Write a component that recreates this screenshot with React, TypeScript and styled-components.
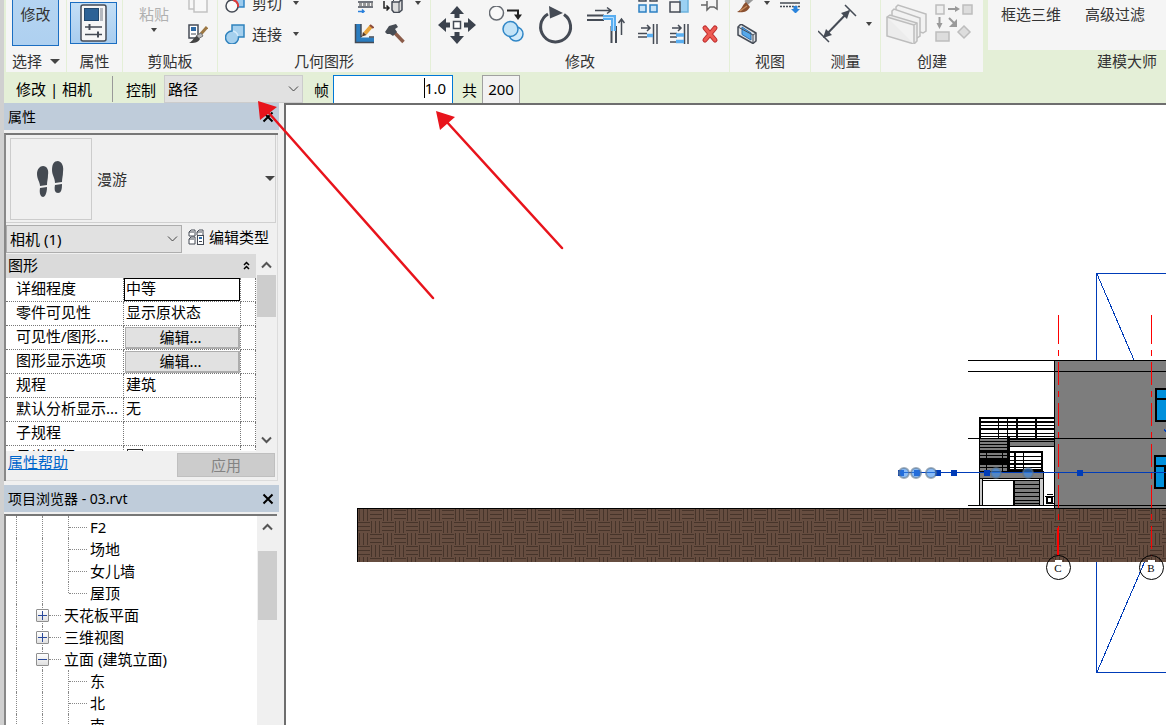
import React from "react";
import styled, { createGlobalStyle } from "styled-components";

const Global = createGlobalStyle`
  * { box-sizing: border-box; }
  body { margin: 0; overflow: hidden; }
  body, button, input, select {
    font-family: "Noto Sans", "Noto Sans CJK SC", sans-serif;
    font-size: 15px;
    color: #000;
  }
  button { padding: 0; border: 0; background: none; line-height: 20px; }
  svg { display: block; flex: none; }
`;

/* ---------- frame ---------- */

const Shell = styled.div`
  height: 100vh;
  display: flex;
  flex-direction: column;
  overflow: hidden;
  background: #f0f0f0;
  border-left: 4px solid #d0d0d0;
  position: relative;
`;

/* ---------- ribbon ---------- */

const Ribbon = styled.header`
  flex: none;
  height: 72px;
  display: flex;
  background: #e4efd7;
  gap: 1px;
  padding-left: 2px;
  overflow: hidden;
  color: #333;
`;

const Group = styled.section<{ $w?: number }>`
  flex: ${(p) => (p.$w ? `0 0 ${p.$w}px` : "1 0 0")};
  display: flex;
  flex-direction: column;
  background: #f5f5f5;
  min-width: 0;
`;

const GroupBody = styled.div<{ $left?: number; $gap?: number }>`
  height: 52px;
  display: flex;
  align-items: flex-end;
  padding: 0 0 8px ${(p) => p.$left ?? 0}px;
  gap: ${(p) => p.$gap ?? 0}px;
`;

const GroupLabel = styled.div`
  height: 20px;
  display: flex;
  align-items: center;
  justify-content: center;
  gap: 8px;
  line-height: 18px;
  padding-bottom: 2px;
  white-space: nowrap;
  color: #333;
`;

const AddinGroup = styled(Group)`
  margin-left: 4px;
  background: none;
`;

const AddinBody = styled.div`
  flex: none;
  height: 50px;
  background: #f5f5f5;
  display: flex;
  gap: 24px;
  padding: 4px 0 0 13px;
  align-items: flex-start;
  white-space: nowrap;
`;

const AddinLabel = styled.div`
  line-height: 22px;
  padding-right: 9px;
  text-align: right;
`;

const RibbonButton = styled.button`
  flex: none;
  display: flex;
  align-items: center;
  color: #333;
`;

const ModifyButton = styled(RibbonButton)`
  width: 47px;
  height: 90px;
  margin-bottom: -2px;
  padding-bottom: 21px;
  justify-content: center;
  align-items: flex-end;
  border: 1px solid #1b6ec2;
  background: linear-gradient(#bcd9f3, #aed0f0);
`;

const PropsButton = styled(RibbonButton)`
  width: 47px;
  height: 42px;
  justify-content: center;
  border: 1px solid #1b6ec2;
  background: linear-gradient(#c4dff6, #a9cdef);
`;

const PasteButton = styled(RibbonButton)`
  height: 40px;
  flex-direction: column;
  gap: 4px;
  color: #b0b0b0;
`;

const MoreButton = styled(RibbonButton)`
  height: 40px;
`;

const Stack = styled.div`
  display: flex;
  flex-direction: column;
  gap: 11px;
`;

const Line = styled.div<{ $gap?: number }>`
  height: 20px;
  display: flex;
  align-items: center;
  gap: ${(p) => p.$gap ?? 7}px;
`;

const IconText = styled(RibbonButton)`
  gap: 7px;
  white-space: nowrap;
`;

const DownMark = styled.span<{ $big?: boolean }>`
  display: inline-block;
  flex: none;
  border: solid transparent;
  border-width: ${(p) => (p.$big ? "5px 5px 0" : "4px 3px 0")};
  border-top-color: #444;
`;

/* ---------- options bar ---------- */

const Options = styled.div`
  flex: none;
  height: 31px;
  display: flex;
  align-items: center;
  background: #e4efd7;
  padding: 3px 0 0 12px;
`;

const OptionTitle = styled.div`
  width: 97px;
  line-height: 26px;
  border-right: 1px solid #999;
`;

const OptionLabel = styled.label<{ $left: number; $right: number }>`
  line-height: 28px;
  padding: 2px ${(p) => p.$right}px 0 ${(p) => p.$left}px;
`;

const SelectWrap = styled.span<{ $w: number }>`
  width: ${(p) => p.$w}px;
  display: grid;
  align-items: center;
  > * { grid-area: 1 / 1; }
  > svg { justify-self: end; margin-right: 4px; pointer-events: none; }
`;

const Select = styled.select<{ $pad: number; $soft?: boolean }>`
  appearance: none;
  width: 100%;
  height: 28px;
  border: 1px solid ${(p) => (p.$soft ? "#ccc" : "#adadad")};
  border-radius: 0;
  background: #e1e1e1;
  padding: 0 0 0 ${(p) => p.$pad}px;
`;

const FrameInput = styled.input`
  width: 120px;
  height: 28px;
  border: 1px solid #0078d7;
  border-bottom: 0;
  padding: 0 6px 3px 0;
  text-align: right;
  outline: 0;
  background: #fff;
`;

const Caret = styled.span`
  width: 1px;
  height: 20px;
  background: #000;
  justify-self: end;
  margin: 0 28px 2px 0;
`;

const InputWrap = styled.span`
  display: grid;
  align-items: center;
  > * { grid-area: 1 / 1; }
`;

const TotalButton = styled.button`
  width: 38px;
  height: 28px;
  padding-bottom: 2px;
  border: 1px solid #a0a0a0;
  border-bottom: 0;
  background: #f2f2f2;
`;

/* ---------- docked panels ---------- */

const Main = styled.main`
  flex: 1;
  min-height: 0;
  display: flex;
`;

const Dock = styled.aside`
  flex: none;
  width: 275px;
  margin-right: 5px;
  display: flex;
  flex-direction: column;
  min-height: 0;
`;

const TitleBar = styled.h2`
  flex: none;
  margin: 0;
  height: 27px;
  padding: 1px 5px 0 4px;
  display: flex;
  align-items: center;
  justify-content: space-between;
  background: #bfccda;
  font-size: 14px;
  font-weight: 400;
  line-height: 22px;
`;

const Panel = styled.div`
  flex: none;
  margin: 3px 1px 4px 0;
  border: solid #888;
  border-width: 2px 0 0 2px;
  border-top-color: #777;
  box-shadow: inset -1px -1px #dcdcdc;
  padding-right: 2px;
  height: 348px;
`;

const TypeSelector = styled.button`
  width: 100%;
  height: 88px;
  padding: 3px 0 3px 4px;
  display: flex;
  align-items: center;
  border-bottom: 1px solid #d0d0d0;
  border-right: 1px solid #d0d0d0;
  color: #333;
`;

const Preview = styled.span`
  width: 82px;
  height: 82px;
  border: 1px solid #ccc;
  display: grid;
  place-items: center;
  margin-right: 5px;
`;

const Grow = styled.span`
  flex: 1;
  text-align: left;
`;

const FilterRow = styled.div`
  display: flex;
  gap: 6px;
  padding: 2px 0 1px;
`;

const EditType = styled.button`
  display: flex;
  align-items: center;
  gap: 5px;
  padding-bottom: 4px;
`;

const Scroller = styled.div`
  display: flex;
  height: 197px;
`;

const Clip = styled.div`
  flex: none;
  width: 250px;
  height: 100%;
  overflow: hidden;
  background: #fff;
`;

const Table = styled.table`
  width: 100%;
  table-layout: fixed;
  border-collapse: separate;
  border-spacing: 0;
  th { font-weight: 400; text-align: left; }
`;

const Category = styled.th`
  height: 24px;
  padding: 0 6px 1px 2px;
  background: #dadada;
`;

const CategoryRow = styled.div`
  display: flex;
  justify-content: space-between;
  align-items: center;
  line-height: 21px;
`;

const Cell = styled.td<{ $active?: boolean }>`
  height: 24px;
  padding: 0 0 3px 2px;
  line-height: 20px;
  white-space: nowrap;
  border-right: 1px dotted #777;
  border-bottom: 1px dotted #777;
  ${(p) => p.$active && "box-shadow: inset 0 0 0 1px #000;"}
`;

const ButtonCell = styled(Cell)`
  padding-bottom: 0;
`;

const NameCell = styled(Cell).attrs({ as: "th", scope: "row" })`
  padding-left: 10px;
`;

const EditButton = styled.button`
  display: block;
  width: 115px;
  height: 22px;
  margin-left: -1px;
  padding: 0 3px 3px 0;
  line-height: 18px;
  border: 1px solid #adadad;
  border-right-width: 2px;
  border-bottom-width: 2px;
  background: #e1e1e1;
`;

const Check = styled.input`
  appearance: none;
  display: block;
  margin: 2px 0 0 1px;
  width: 16px;
  height: 16px;
  border: 1px solid #333;
`;

const Bar = styled.div<{ $before: number }>`
  flex: none;
  width: 20px;
  display: flex;
  flex-direction: column;
  align-items: center;
  justify-content: space-between;
  background: #f0f0f0;
  padding: ${(p) => p.$before}px 0 7px;
`;

const BarTop = styled.div<{ $gap: number }>`
  display: flex;
  flex-direction: column;
  align-items: center;
  gap: ${(p) => p.$gap}px;
`;

const Thumb = styled.div<{ $h: number }>`
  width: 19px;
  height: ${(p) => p.$h}px;
  background: #cdcdcd;
`;

const Footer = styled.div`
  display: flex;
  justify-content: space-between;
  padding: 2px 1px 0 2px;
  a { color: #0066cc; line-height: 19px; }
`;

const Apply = styled.button`
  width: 98px;
  height: 24px;
  border: 1px solid #bfbfbf;
  background: #ccc;
  color: #838383;
`;

/* ---------- project browser ---------- */

const TreePanel = styled.div`
  flex: 1;
  min-height: 0;
  margin: 2px 2px 0 0;
  border: solid #888;
  border-width: 2px 0 0 2px;
  border-top-color: #777;
  display: flex;
  overflow: hidden;
  background: #fff;
`;

const Tree = styled.ul`
  flex: 1;
  margin: 0;
  padding: 0;
  list-style: none;
`;

const TreeRow = styled.li`
  height: 22px;
  display: flex;
  align-items: center;
  padding-left: 10px;
  line-height: 22px;
  white-space: nowrap;
`;

const Guide = styled.span<{ $half?: boolean }>`
  flex: none;
  width: 26px;
  height: ${(p) => (p.$half ? 11 : 22)}px;
  align-self: flex-start;
  border-left: 1px dotted #888;
`;

const Stub = styled.span<{ $leaf?: boolean }>`
  flex: none;
  width: ${(p) => (p.$leaf ? 18 : 12)}px;
  margin: 0 3px 0 ${(p) => (p.$leaf ? -25 : 0)}px;
  border-top: 1px dotted #888;
`;

const Toggle = styled.button`
  flex: none;
  width: 13px;
  height: 13px;
  margin-left: -32px;
  border: 1px solid #8f8f8f;
  border-radius: 1px;
  background: linear-gradient(#fff, #e0e0e0);
`;

/* ---------- drawing area ---------- */

const Canvas = styled.section`
  flex: 1;
  min-width: 0;
  overflow: hidden;
  background: #fff;
  border: solid #6e6e6e;
  border-width: 2px 0 0 2px;
`;

const FullSvg = styled.svg`
  width: 100%;
  height: 100%;
`;

const Callouts = styled.svg`
  position: absolute;
  top: 0;
  left: -4px;
  width: 600px;
  height: 320px;
  pointer-events: none;
`;

/* ---------- icons ---------- */

const D = "#454b55";
const B = "#5aaef0";

const Icon = ({ w = 20, h = 20, children }: { w?: number; h?: number; children: React.ReactNode }) => (
  <svg width={w} height={h} viewBox={`0 0 ${w} ${h}`} fill="none" stroke={D} strokeWidth="1.5">
    {children}
  </svg>
);

const Chevron = ({ up = false, bold = false }) => (
  <svg width="11" height="8" viewBox="0 0 11 8" fill="none" stroke={bold ? "#555" : "#444"} strokeWidth={bold ? 2 : 1}>
    <path d={up ? "M1 6.5 5.5 2 10 6.5" : "M1 1.5 5.5 6 10 1.5"} />
  </svg>
);

const Close = () => (
  <svg width="12" height="12" viewBox="0 0 12 12" stroke="#000" strokeWidth="2">
    <path d="M1.5 1.5 10.5 10.5M10.5 1.5 1.5 10.5" />
  </svg>
);

const PropsIcon = () => (
  <Icon w={28} h={38}>
    <rect x="1" y="1" width="25" height="36" rx="2" fill="#f6f6f6" />
    <rect x="4.5" y="4.500" width="14" height="12" fill="#2d6296" stroke="#23486c" strokeWidth="1" />
    <path d="M21.500 4V17" stroke="#b5b9bf" strokeWidth="3" />
    <path d="M5 23H22M5 30.500H22" />
    <path d="M9.500 20V26M18 27.500V33.500" strokeWidth="2" />
  </Icon>
);

const CopyIcon = () => (
  <Icon>
    <path d="M1 1V16H6M6 5H19V19H6Z" fill="#f8f8f8" stroke="#c2c2c2" />
  </Icon>
);

const MatchIcon = () => (
  <Icon>
    <rect x="1" y="1" width="9" height="13" fill="#fff" />
    <rect x="3" y="3" width="5" height="4" fill="#2f6ba5" stroke="none" />
    <path d="M3 10H8" strokeWidth="1" />
    <path d="M19 3 12 11" stroke="#9c7743" strokeWidth="3" />
    <path d="M13 9 15 12 10 15 8 12Z" fill="#bbb" stroke="#777" strokeWidth="1" />
    <path d="M9 12 12 15C10 19 6 19 1 19 5 17 5 14 9 12Z" fill="#444" stroke="none" />
  </Icon>
);

const CutIcon = () => (
  <Icon>
    <path d="M9 3H19V14H13" fill="#9ccbee" stroke="#3185c5" />
    <circle cx="7" cy="13" r="6" fill="#fafafa" />
    <path d="M8 7A6 6 0 0 1 13 14" stroke="#e03a3a" strokeWidth="2" />
  </Icon>
);

const JoinIcon = () => (
  <Icon>
    <path d="M7 1H19V13H13.500A6.500 6.500 0 1 1 7 7Z" fill="#a5d0ee" stroke="#2f82bd" />
    <path d="M8 7A7 7 0 0 1 13 12" stroke="#d3eafa" />
  </Icon>
);

const WallIcon = () => (
  <Icon>
    <path d="M4 9H19M4 14H19" />
    <path d="M5 11.500H19" stroke="#999" strokeWidth="3" strokeDasharray="3 1" />
    <path d="M4 18.500H10M8 16.500 10 18.500 8 20" stroke="#2980dc" />
  </Icon>
);

const CubeIcon = () => (
  <Icon w={24}>
    <path d="M11 9V17L13 19.500H18L21 17V6L18 9H11Z" fill="#ddd" />
    <path d="M11 9 14 6H21M18 9V19" strokeWidth="1" />
    <path d="M3 8V15H8M5.500 12.500 8 15 5.500 17.500" stroke="#222" />
  </Icon>
);

const PencilWallIcon = () => (
  <Icon>
    <path d="M4.500 0V16H20" stroke="#2b7dc0" strokeWidth="5" />
    <path d="M1.500 0V18.500H20M7 0V12.500H8M15 13H20" />
    <path d="M17.500 2 11 9.500" stroke="#e8a33a" strokeWidth="4" />
    <path d="M16 1 19.500 4" stroke="#8c4b3b" strokeWidth="2" />
    <path d="M9 8 12.500 11 8 12.500Z" fill="#5b3a1e" stroke="none" />
  </Icon>
);

const HammerIcon = () => (
  <Icon>
    <path d="M9 8 18.500 18" stroke="#8b5c49" strokeWidth="3.500" />
    <path d="M0 8 4 2 11 0 13 3 10 5 12 8 8 12 5 10 2 10Z" fill="#464c54" stroke="none" />
  </Icon>
);

const MoveIcon = () => (
  <Icon w={38} h={38}>
    <path d="M19 0 26 8H21.500V12H16.500V8H12ZM19 38 26 30H21.500V26H16.500V30H12ZM0 19 8 12V16.500H12V21.500H8V26ZM38 19 30 12V16.500H26V21.500H30V26Z" fill="#3b424d" stroke="none" />
    <rect x="15.500" y="15.500" width="7" height="7" fill="#fff" />
  </Icon>
);

const CopyObjIcon = () => (
  <Icon w={36} h={38}>
    <circle cx="7.500" cy="7" r="7" fill="#f8f8f8" stroke="#666b72" />
    <path d="M18 4.500H29V10" stroke="#222" strokeWidth="2" />
    <path d="M25 8.500H33L29 14Z" fill="#222" stroke="none" />
    <circle cx="27" cy="28" r="7" fill="#d1eafa" stroke="#3086c6" />
    <circle cx="21.500" cy="23" r="7.500" fill="#c3e3f7" stroke="#3086c6" />
  </Icon>
);

const RotateIcon = () => (
  <Icon w={36} h={38}>
    <path d="M26 8.500A15 15 0 1 1 10 8" strokeWidth="3" />
    <path d="M11 0 25 7 12 12.500Z" fill={D} stroke="none" />
  </Icon>
);

const TrimIcon = () => (
  <Icon w={38} h={38}>
    <path d="M8 4.500H23M20 1.500 24 4.500 20 7.500M34.500 29V14M31.500 17 34.500 13 37.500 17" />
    <path d="M0 9.500H17M0 14H17M24.500 20V37M29 20V37" strokeWidth="2" />
    <path d="M16 11.500H26.500V25" stroke={B} strokeWidth="5" />
    <path d="M16 11.500H26.500V25" stroke="#b9e0ff" strokeWidth="1" />
  </Icon>
);

const ArrayIcon = () => (
  <Icon>
    <path d="M1 2H8V8H1ZM12 2H19V8H12Z" fill="#eee" />
    <path d="M1 12H8V19H1ZM12 12H19V19H12Z" fill="#c5e3f8" stroke="#2d80c2" />
  </Icon>
);

const ScaleIcon = () => (
  <Icon>
    <path d="M10 1H19V19H10" fill="#9bd0f2" stroke="#6eb2dd" />
    <rect x="1" y="9" width="10" height="10" fill="#f3f3f3" />
  </Icon>
);

const PinIcon = () => (
  <Icon>
    <path d="M1 12H7M7 8V17L10 14H14L17 16V7" stroke="#666" />
  </Icon>
);

const AlignIcon = ({ multi = false }) => (
  <Icon>
    <path d="M15.500 0V20M19 0V20" />
    <path d="M3 4H12M9 1 12 4 9 7" />
    <path d={multi ? "M1 9.500H8M1 13H8M1 18H8" : "M0 9.500H9M0 13H9"} />
    <path d={multi ? "M7 11H15M7 17.500H15" : "M9 11.500H15"} stroke={B} strokeWidth="3.500" />
  </Icon>
);

const DeleteIcon = () => (
  <Icon>
    <path d="M5 4 15 16M15 4 5 16" stroke="#bc2d2d" strokeWidth="5" strokeLinecap="round" />
    <path d="M5 4 15 16M15 4 5 16" stroke="#ee5a52" strokeWidth="3" strokeLinecap="round" />
  </Icon>
);

const BrushIcon = () => (
  <Icon>
    <path d="M9 10 17 3" stroke="#999" strokeWidth="5" />
    <path d="M9 9 13 14C10 19 6 20 0 19 5 17 5 12 9 9Z" fill="#8a5030" stroke="none" />
    <path d="M3 18 10 13" stroke="#c98b5b" />
  </Icon>
);

const LinesIcon = () => (
  <Icon>
    <path d="M0 10H20" />
    <path d="M0 13.500H20" strokeDasharray="2 1" />
    <path d="M13.500 13H17.500V16H20L15.500 20.500 11 16H13.500Z" fill="#2b84dc" stroke="none" />
  </Icon>
);

const BoxIcon = () => (
  <Icon>
    <path d="M1 3 4 0 19 9V17L16 19.500 1 11Z" fill="#dde1e5" />
    <path d="M5 3 14 9V16L5 10.500Z" fill="#55a8ea" stroke="#2d6fae" strokeWidth="1" />
    <path d="M16 19V11L19 9M16 11 1 3" strokeWidth="1" />
  </Icon>
);

const MeasureIcon = () => (
  <Icon w={40} h={40}>
    <path d="M6 33 31 7" strokeWidth="2" />
    <path d="M5 34 8 25 14 31ZM32 6 23 9 29 15Z" fill={D} stroke="none" />
    <path d="M0 27 11 38M27 1 38 12" />
  </Icon>
);

const GroupIcon = () => (
  <Icon w={42} h={40}>
    <g fill="#f2f2f2" stroke="#bdbdbd">
      <path d="M10 3 12 1 40 10V27L37 29 10 20Z" />
      <path d="M6 7 8 5 34 14V32L31 34 6 25Z" />
      <path d="M1 13 4 11 31 19V37L28 40 1 32Z" fill="#ececec" />
      <path d="M1 13 28 21V40M28 21 31 19" />
    </g>
  </Icon>
);

const SimilarIcon = () => (
  <Icon w={38} h={40}>
    <g fill="#eee" stroke="#bdbdbd">
      <rect x="1" y="1" width="8" height="9" />
      <rect x="28" y="1" width="9" height="9" fill="#ddd" />
      <rect x="1" y="28" width="13" height="9" fill="#ddd" />
      <path d="M29 22 35 28 29 34 23 28Z" fill="#ddd" />
    </g>
    <g stroke="#9a9a9a" strokeWidth="2">
      <path d="M13 5H21M4.500 13V20M14 14 19 19" />
      <path d="M20 2 25 5 20 8ZM1.500 19 4.500 25 7.500 19ZM22 15V23H14Z" fill="#9a9a9a" stroke="none" />
    </g>
  </Icon>
);

const FeetIcon = () => (
  <svg width="30" height="40" viewBox="0 0 30 40" fill="#444a52">
    <path d="M7 7C11 7 13 11 12 16 12 20 11 22 11 26L4 27C4 23 1 20 1 15 1 10 4 7 7 7Z" />
    <path d="M4 29 11 28C11 34 9 38 7 38 5 38 3 35 4 29Z" />
    <path d="M22 2C26 3 28 7 27 13 27 17 26 19 26 23L19 24C19 19 16 16 16 11 16 5 18 2 22 2Z" />
    <path d="M19 26 26 25C26 31 25 34 22 34 19 34 18 31 19 26Z" />
  </svg>
);

const EditTypeIcon = () => (
  <Icon w={16} h={16}>
    <g strokeWidth="1">
      <path d="M1 3 3 1H7V7H1ZM9 3 11 1H15V6M9 6V3M1 10 3 8H7V15H1ZM1 3H6M9 3H14M1 10H6" fill="#fff" />
      <rect x="9.500" y="6.500" width="6" height="9" fill="#fff" />
      <path d="M11 9H14" stroke="#2d6fae" strokeWidth="2" />
      <path d="M11 12.500H14" />
    </g>
  </Icon>
);

/* ---------- data ---------- */

type Prop = { name: string; value?: string; kind?: "edit" | "active" | "check" };

const PROPS: Prop[] = [
  { name: "详细程度", value: "中等", kind: "active" },
  { name: "零件可见性", value: "显示原状态" },
  { name: "可见性/图形...", kind: "edit" },
  { name: "图形显示选项", kind: "edit" },
  { name: "规程", value: "建筑" },
  { name: "默认分析显示...", value: "无" },
  { name: "子规程" },
  { name: "日光路径", kind: "check" },
];

type Node = { label: string; leaf?: boolean; last?: boolean; open?: boolean };

const NODES: Node[] = [
  { label: "F2", leaf: true },
  { label: "场地", leaf: true },
  { label: "女儿墙", leaf: true },
  { label: "屋顶", leaf: true, last: true },
  { label: "天花板平面" },
  { label: "三维视图" },
  { label: "立面 (建筑立面)", open: true },
  { label: "东", leaf: true },
  { label: "北", leaf: true },
  { label: "南", leaf: true },
];

/* ---------- elevation drawing ---------- */

const BLUE = "#003cb8";

const Elevation = () => (
  <FullSvg shapeRendering="crispEdges" role="img" aria-label="立面">
    <defs>
      <pattern id="weave" x="358" y="509" width="24" height="24" patternUnits="userSpaceOnUse">
        <rect width="24" height="24" fill="#664d40" />
        <path
          d="M1.500 0V12M5.500 0V12M9.500 0V12M12 1.500H24M12 5.500H24M12 9.500H24M13.500 12V24M17.500 12V24M21.500 12V24M0 13.500H12M0 17.500H12M0 21.500H12"
          stroke="#46342a"
        />
      </pattern>
    </defs>
    <g transform="translate(-286 -105)" fill="none" stroke="#000">
      <path d="M1096.500 360V273.500H3000M1097 274 1134 360M1096.500 561V672.500H3000M1097 672 1145 561" stroke={BLUE} />
      <rect x="1054.500" y="360.500" width="2000" height="148" fill="#7d7d7d" />
      <path d="M968 360.500H3000M968 371.500H3000M968 438.500H3000M968 505.500H3000" />

      <path d="M979 418H1055M979 422H1055M979 429H1055M980 417V438" strokeWidth="2" />
      <path d="M979 425.500H1055M979 433.500H1055M979 436.500H1055M998.500 417V438M1007.500 417V438" />
      <path d="M1017 417V438M1036 417V438" strokeWidth="2" />

      <rect x="1009.500" y="439.500" width="45" height="7" fill="#7d7d7d" />
      <path d="M1009 441.500H1055" />
      <rect x="979.500" y="438.500" width="30" height="33" fill="#7d7d7d" />
      <path d="M979 441.500H1009M979 444.500H1009M979 447.500H1009M979 455.500H1009M979 467.500H1009M986.500 450V471M1002.500 450V471" />
      <path d="M979 451.500H1009" strokeWidth="3" />
      <path d="M979 461.500H1009" strokeWidth="7" />
      <path d="M1008.500 437V471" strokeWidth="3" />

      <path d="M1010 452H1043M1010 464H1043M1010 470H1043M1015 451V471M1042 451V471" strokeWidth="2" />
      <path d="M1010 456.500H1043M1010 460.500H1043M1010 467.500H1043M1023.500 451V471" />

      <rect x="979.500" y="478.500" width="3" height="27" fill="#ccc" />
      <rect x="1039.500" y="478.500" width="4" height="27" fill="#ccc" />
      <rect x="979.500" y="471.500" width="64" height="7" fill="#7d7d7d" />
      <path d="M982 480.500H1040" />
      <rect x="1013.500" y="480.500" width="26" height="25" fill="#7d7d7d" />
      <path d="M1014 484.500H1039M1014 488.500H1039M1014 492.500H1039M1014 496.500H1039M1014 500.500H1039M1014 503.500H1039" />
      <path d="M1014 480V506" strokeWidth="2" />
      <path d="M1045 496.500H1054M1047 494.500H1053M1046 503.500H1054" />
      <rect x="1047" y="497" width="5" height="6" strokeWidth="2" />

      <g fill="#0090dc" strokeWidth="2">
        <rect x="1156" y="389" width="24" height="32" />
        <path d="M1156 399H1180" />
        <rect x="1155" y="456" width="24" height="32" />
        <path d="M1155 466H1179M1165 466V488" />
      </g>
      <path d="M1164 429 1166 432 1170 428" stroke={BLUE} />

      <rect x="357" y="508" width="3000" height="54" fill="url(#weave)" stroke="none" />
      <path d="M357 508.500H3000M357.500 508V562" />

      <g stroke="#f00">
        <path d="M1058.500 315V344M1151.500 315V344" />
        <path d="M1058.500 350V556M1151.500 350V556" strokeDasharray="6 6 23 6" />
        <path d="M1058 528V556" strokeWidth="2" />
      </g>

      <path d="M898 472.500H3000" stroke={BLUE} />
      {[901, 917, 938, 954, 987, 1080].map((x) => (
        <rect key={x} x={x - 3} y="470" width="6" height="6" fill={BLUE} stroke="none" />
      ))}
      <g shapeRendering="auto">
        {[904, 916, 931, 996, 1028].map((x) => (
          <circle key={x} cx={x} cy="473" r="5" fill="#3a8df0" fillOpacity=".6" stroke="#5f7488" strokeOpacity=".6" strokeWidth="2" />
        ))}
        {[
          [1058, "C"],
          [1151, "B"],
        ].map(([x, t]) => (
          <g key={t}>
            <circle cx={Number(x) + 0.5} cy="567.500" r="12" />
            <rect x={Number(x) - 3} y="560" width="7" height="12" fill="#fff" stroke="none" />
            <text x={x} y="572" textAnchor="middle" fontFamily="Liberation Serif, serif" fontSize="11" fill="#000" stroke="none">
              {t}
            </text>
          </g>
        ))}
      </g>
    </g>
  </FullSvg>
);

const PropertyRow = ({ p }: { p: Prop }) => (
  <tr>
    <NameCell>{p.name}</NameCell>
    {p.kind === "edit" ? (
      <ButtonCell>
        <EditButton>编辑...</EditButton>
      </ButtonCell>
    ) : (
      <Cell $active={p.kind === "active"}>
        {p.kind === "check" && <Check type="checkbox" aria-label={p.name} />}
        {p.value}
      </Cell>
    )}
    <Cell />
  </tr>
);

const TreeNode = ({ n }: { n: Node }) => (
  <TreeRow>
    <Guide />
    <Guide />
    {n.leaf ? (
      <>
        <Guide $half={n.last} />
        <Stub $leaf />
      </>
    ) : (
      <>
        <Toggle aria-label={n.label}>
          <svg width="11" height="11" viewBox="0 0 11 11" stroke="#2b4a9b">
            <path d={n.open ? "M1 5.500H10" : "M1 5.500H10M5.500 1V10"} />
          </svg>
        </Toggle>
        <Stub />
      </>
    )}
    <span>{n.label}</span>
  </TreeRow>
);

export default function App() {
  return (
    <Shell>
      <Global />
      <Ribbon>
        <Group $w={60}>
          <GroupBody $left={6}>
            <ModifyButton>修改</ModifyButton>
          </GroupBody>
          <GroupLabel>
            选择
            <DownMark $big />
          </GroupLabel>
        </Group>
        <Group $w={55}>
          <GroupBody $left={3}>
            <PropsButton aria-label="属性">
              <PropsIcon />
            </PropsButton>
          </GroupBody>
          <GroupLabel>属性</GroupLabel>
        </Group>
        <Group $w={94}>
          <GroupBody $left={16} $gap={19}>
            <PasteButton>
              粘贴
              <DownMark />
            </PasteButton>
            <Stack>
              <RibbonButton aria-label="复制"><CopyIcon /></RibbonButton>
              <RibbonButton aria-label="匹配"><MatchIcon /></RibbonButton>
            </Stack>
          </GroupBody>
          <GroupLabel>剪贴板</GroupLabel>
        </Group>
        <Group $w={212}>
          <GroupBody $left={7} $gap={55}>
            <Stack>
              <Line $gap={11}>
                <IconText><CutIcon />剪切</IconText>
                <DownMark />
              </Line>
              <Line $gap={11}>
                <IconText><JoinIcon />连接</IconText>
                <DownMark />
              </Line>
            </Stack>
            <Stack>
              <Line>
                <RibbonButton aria-label="墙"><WallIcon /></RibbonButton>
                <Line $gap={10}>
                  <RibbonButton aria-label="拆分面"><CubeIcon /></RibbonButton>
                  <DownMark />
                </Line>
              </Line>
              <Line $gap={11}>
                <RibbonButton aria-label="墙连接"><PencilWallIcon /></RibbonButton>
                <RibbonButton aria-label="拆除"><HammerIcon /></RibbonButton>
              </Line>
            </Stack>
          </GroupBody>
          <GroupLabel>几何图形</GroupLabel>
        </Group>
        <Group $w={298}>
          <GroupBody $left={7} $gap={13}>
            <RibbonButton aria-label="移动"><MoveIcon /></RibbonButton>
            <RibbonButton aria-label="复制图元"><CopyObjIcon /></RibbonButton>
            <RibbonButton aria-label="旋转"><RotateIcon /></RibbonButton>
            <RibbonButton aria-label="修剪"><TrimIcon /></RibbonButton>
            <Stack>
              <Line $gap={11}>
                <RibbonButton aria-label="阵列"><ArrayIcon /></RibbonButton>
                <RibbonButton aria-label="缩放"><ScaleIcon /></RibbonButton>
                <RibbonButton aria-label="锁定"><PinIcon /></RibbonButton>
              </Line>
              <Line $gap={11}>
                <RibbonButton aria-label="延伸"><AlignIcon /></RibbonButton>
                <RibbonButton aria-label="延伸多个"><AlignIcon multi /></RibbonButton>
                <RibbonButton aria-label="删除"><DeleteIcon /></RibbonButton>
              </Line>
            </Stack>
          </GroupBody>
          <GroupLabel>修改</GroupLabel>
        </Group>
        <Group $w={80}>
          <GroupBody $left={7}>
            <Stack>
              <Line>
                <RibbonButton aria-label="替换"><BrushIcon /></RibbonButton>
                <DownMark />
                <Line $gap={3}>
                  <span />
                  <RibbonButton aria-label="线处理"><LinesIcon /></RibbonButton>
                </Line>
              </Line>
              <RibbonButton aria-label="选择框"><BoxIcon /></RibbonButton>
            </Stack>
          </GroupBody>
          <GroupLabel>视图</GroupLabel>
        </Group>
        <Group $w={69}>
          <GroupBody $left={7} $gap={8}>
            <RibbonButton aria-label="测量"><MeasureIcon /></RibbonButton>
            <MoreButton aria-label="更多"><DownMark /></MoreButton>
          </GroupBody>
          <GroupLabel>测量</GroupLabel>
        </Group>
        <Group $w={102}>
          <GroupBody $left={5} $gap={7}>
            <RibbonButton aria-label="创建组"><GroupIcon /></RibbonButton>
            <RibbonButton aria-label="创建类似"><SimilarIcon /></RibbonButton>
          </GroupBody>
          <GroupLabel>创建</GroupLabel>
        </Group>
        <AddinGroup>
          <AddinBody>
            <RibbonButton>框选三维</RibbonButton>
            <RibbonButton>高级过滤</RibbonButton>
          </AddinBody>
          <AddinLabel>建模大师</AddinLabel>
        </AddinGroup>
      </Ribbon>

      <Options>
        <OptionTitle>修改 | 相机</OptionTitle>
        <OptionLabel htmlFor="control" $left={13} $right={8}>控制</OptionLabel>
        <SelectWrap $w={139}>
          <Select id="control" $pad={3} $soft>
            <option>路径</option>
          </Select>
          <Chevron />
        </SelectWrap>
        <OptionLabel htmlFor="frame" $left={11} $right={4}>帧</OptionLabel>
        <InputWrap>
          <FrameInput id="frame" defaultValue="1.0" />
          <Caret />
        </InputWrap>
        <OptionLabel htmlFor="total" $left={9} $right={5}>共</OptionLabel>
        <TotalButton id="total">200</TotalButton>
      </Options>

      <Main>
        <Dock>
          <TitleBar>
            属性
            <button aria-label="关闭属性"><Close /></button>
          </TitleBar>
          <Panel>
            <TypeSelector>
              <Preview><FeetIcon /></Preview>
              <Grow>漫游</Grow>
              <DownMark $big />
            </TypeSelector>
            <FilterRow>
              <SelectWrap $w={176}>
                <Select aria-label="类别" $pad={3}>
                  <option>相机 (1)</option>
                </Select>
                <Chevron />
              </SelectWrap>
              <EditType><EditTypeIcon />编辑类型</EditType>
            </FilterRow>
            <Scroller>
              <Clip>
                <Table>
                  <colgroup>
                    <col style={{ width: 118 }} />
                    <col style={{ width: 117 }} />
                    <col />
                  </colgroup>
                  <thead>
                    <tr>
                      <Category colSpan={3}>
                        <CategoryRow>
                          图形
                          <svg width="7" height="9" viewBox="0 0 7 9" fill="none" stroke="#000" strokeWidth="1.500">
                            <path d="M1 4 3.500 1.500 6 4M1 8 3.500 5.500 6 8" />
                          </svg>
                        </CategoryRow>
                      </Category>
                    </tr>
                  </thead>
                  <tbody>
                    {PROPS.map((p) => (
                      <PropertyRow key={p.name} p={p} />
                    ))}
                  </tbody>
                </Table>
              </Clip>
              <Bar $before={7}>
                <BarTop $gap={6}>
                  <Chevron up bold />
                  <Thumb $h={42} />
                </BarTop>
                <Chevron bold />
              </Bar>
            </Scroller>
            <Footer>
              <a href="#help">属性帮助</a>
              <Apply disabled>应用</Apply>
            </Footer>
          </Panel>

          <TitleBar>
            项目浏览器 - 03.rvt
            <button aria-label="关闭项目浏览器"><Close /></button>
          </TitleBar>
          <TreePanel>
            <Tree>
              {NODES.map((n) => (
                <TreeNode key={n.label} n={n} />
              ))}
            </Tree>
            <Bar $before={7}>
              <BarTop $gap={20}>
                <Chevron up bold />
                <Thumb $h={69} />
              </BarTop>
            </Bar>
          </TreePanel>
        </Dock>
        <Canvas>
          <Elevation />
        </Canvas>
      </Main>

      <Callouts stroke="#e8141c" fill="#e8141c">
        <path d="M268 112 433 298M446 121 562 248" strokeWidth="2.500" strokeLinecap="round" />
        <path d="M258 101 277 107 260 120ZM436 111 455 117 440 130Z" stroke="none" />
      </Callouts>
    </Shell>
  );
}
